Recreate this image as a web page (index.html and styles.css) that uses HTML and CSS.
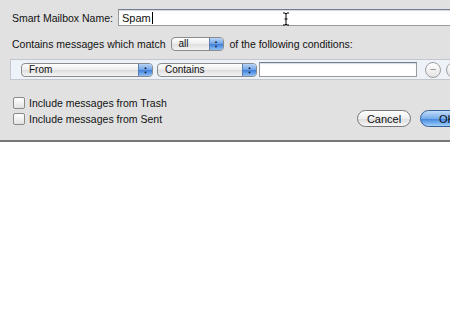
FILE: index.html
```html
<!DOCTYPE html>
<html lang="en">
  <head>
    <meta charset="UTF-8" />
    <title>Smart Mailbox</title>
    <link rel="stylesheet" href="styles.css">
  </head>
  <body>
    <div class="dialog">
      <div class="name-row">
        <label class="label">Smart Mailbox Name:</label>
        <div class="field name-field">
          <span>Spam</span><span class="caret"></span>
          <svg class="ibeam" width="8" height="14" viewBox="0 0 8 14">
            <path d="M1 1 L3 1 L4 2 L5 1 L7 1 M4 2 L4 12 M1 13 L3 13 L4 12 L5 13 L7 13 M2.5 7 L5.5 7" stroke="#000" stroke-width="1" fill="none"/>
          </svg>
        </div>
      </div>

      <div class="match-row">
        <span>Contains messages which match</span>
        <div class="popup popup-all"><span>all</span><span class="cap">&#9650;<br>&#9660;</span></div>
        <span>of the following conditions:</span>
      </div>

      <div class="rules">
        <div class="popup popup-from"><span>From</span><span class="cap">&#9650;<br>&#9660;</span></div>
        <div class="popup popup-op"><span>Contains</span><span class="cap">&#9650;<br>&#9660;</span></div>
        <div class="field rule-field"></div>
        <span class="round-btn">&minus;</span>
        <span class="round-btn">+</span>
      </div>

      <div class="bottom">
        <div class="checks">
          <label class="check"><span class="box"></span>Include messages from Trash</label>
          <label class="check"><span class="box"></span>Include messages from Sent</label>
        </div>
        <div class="buttons">
          <button class="btn">Cancel</button>
          <button class="btn btn-ok">OK</button>
        </div>
      </div>
    </div>
  </body>
</html>
```

FILE: styles.css
```css
body {
  margin: 0;
  background: #fff;
  overflow: hidden;
  font-family: "Liberation Sans", Arial, sans-serif;
  font-size: 10.5px;
  color: #111;
}
.dialog {
  width: 500px;
  height: 142px;
  box-sizing: border-box;
  padding: 9px 0 0 12px;
  background: #e1e1e1;
  border-bottom: 2px solid #767676;
  box-shadow: 0 2px 3px rgba(0, 0, 0, 0.25);
}
.name-row {
  display: flex;
  align-items: center;
  height: 17px;
}
.label {
  margin-right: 5px;
}
.field {
  background: #fff;
  border: 1px solid #9a9a9a;
  border-top-color: #6f7f95;
  box-shadow: inset 0 1px 1px rgba(0, 0, 0, 0.15);
  box-sizing: border-box;
}
.name-field {
  position: relative;
  flex: 1;
  height: 17px;
  padding: 1px 3px;
  display: flex;
  align-items: center;
  font-size: 11px;
}
.caret {
  display: inline-block;
  width: 1px;
  height: 12px;
  background: #000;
  margin-left: 1px;
}
.ibeam {
  position: absolute;
  left: 163px;
  top: 2px;
}
.match-row {
  display: flex;
  align-items: center;
  gap: 5px;
  margin-top: 10px;
  height: 15px;
}
.popup {
  display: flex;
  align-items: center;
  justify-content: space-between;
  height: 14px;
  box-sizing: border-box;
  border: 1px solid #8b8b8b;
  border-radius: 4px;
  background: linear-gradient(#ffffff, #ececec 50%, #dedede 51%, #f4f4f4);
  padding-left: 7px;
  font-size: 10px;
  overflow: hidden;
}
.cap {
  width: 14px;
  height: 100%;
  border-left: 1px solid #5d7fb5;
  background: linear-gradient(#b9d5f6, #6ea2e6 50%, #3f7ed9 51%, #8fc2f6);
  color: #102040;
  font-size: 4px;
  line-height: 5px;
  text-align: center;
  padding-top: 1px;
  box-sizing: border-box;
}
.popup-all {
  width: 53px;
  margin: 0 1px 0 0;
}
.rules {
  display: flex;
  align-items: center;
  margin: 8px 0 0 -2px;
  height: 21px;
  box-sizing: border-box;
  border: 1px solid #c3c7cd;
  background: #eef3f9;
  padding-left: 10px;
}
.popup-from {
  width: 132px;
  margin-right: 4px;
}
.popup-op {
  width: 100px;
  margin-right: 2px;
}
.rule-field {
  width: 158px;
  height: 15px;
}
.round-btn {
  width: 14px;
  height: 14px;
  margin-left: 8px;
  border: 1px solid #9c9c9c;
  border-radius: 50%;
  background: linear-gradient(#ffffff, #e4e4e4);
  color: #888;
  font-size: 11px;
  line-height: 13px;
  text-align: center;
}
.round-btn + .round-btn {
  margin-left: 5px;
}
.bottom {
  display: flex;
  justify-content: space-between;
  align-items: flex-end;
  margin-top: 17px;
  padding-right: 26px;
}
.checks {
  display: flex;
  flex-direction: column;
  gap: 5px;
}
.check {
  display: flex;
  align-items: center;
  height: 11px;
}
.box {
  width: 10px;
  height: 10px;
  margin: 0 4px 0 1px;
  border: 1px solid #8a8a8a;
  border-radius: 2px;
  background: linear-gradient(#ffffff, #e2e2e2);
}
.buttons {
  display: flex;
  gap: 9px;
  margin-bottom: -3px;
}
.btn {
  height: 17px;
  width: 54px;
  padding: 0;
  border: 1px solid #777;
  border-radius: 9px;
  background: linear-gradient(#ffffff, #eeeeee 50%, #dcdcdc 51%, #f7f7f7);
  font-family: "Liberation Sans", Arial, sans-serif;
  font-size: 11px;
  color: #111;
}
.btn-ok {
  width: 54px;
  border-color: #34609c;
  background: linear-gradient(#c2dcf8, #77adeb 50%, #3f82dc 51%, #9ed0fb);
}
```
